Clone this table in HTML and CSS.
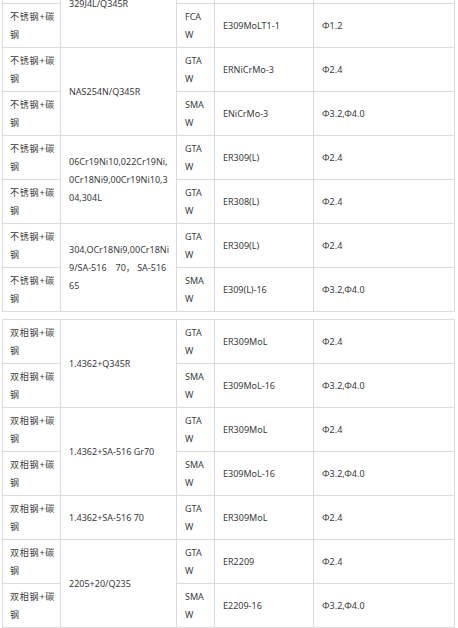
FILE: index.html
```html
<!DOCTYPE html>
<html lang="zh">
<head>
<meta charset="utf-8">
<title>焊材选用表</title>
<link rel="stylesheet" href="styles.css">
</head>
<body>
<div class="page">
  <table class="grid first">
    <colgroup><col class="c1"><col class="c2"><col class="c3"><col class="c4"><col class="c5"></colgroup>
    <tr><td class="cn">不锈钢+碳钢</td><td class="mat" rowspan="2">329J4L/Q345R</td><td>GTAW</td><td>ER309MoL</td><td>Φ2.4</td></tr>
    <tr><td class="cn">不锈钢+碳钢</td><td>FCAW</td><td>E309MoLT1-1</td><td>Φ1.2</td></tr>
    <tr><td class="cn">不锈钢+碳钢</td><td class="mat" rowspan="2">NAS254N/Q345R</td><td>GTAW</td><td>ERNiCrMo-3</td><td>Φ2.4</td></tr>
    <tr><td class="cn">不锈钢+碳钢</td><td>SMAW</td><td>ENiCrMo-3</td><td>Φ3.2,Φ4.0</td></tr>
    <tr><td class="cn">不锈钢+碳钢</td><td class="mat" rowspan="2">06Cr19Ni10,022Cr19Ni,0Cr18Ni9,00Cr19Ni10,304,304L</td><td>GTAW</td><td>ER309(L)</td><td>Φ2.4</td></tr>
    <tr><td class="cn">不锈钢+碳钢</td><td>GTAW</td><td>ER308(L)</td><td>Φ2.4</td></tr>
    <tr><td class="cn">不锈钢+碳钢</td><td class="mat" rowspan="2">304,OCr18Ni9,00Cr18Ni9/SA-516　70， SA-516 65</td><td>GTAW</td><td>ER309(L)</td><td>Φ2.4</td></tr>
    <tr><td class="cn">不锈钢+碳钢</td><td>SMAW</td><td>E309(L)-16</td><td>Φ3.2,Φ4.0</td></tr>
  </table>
  <table class="grid second">
    <colgroup><col class="c1"><col class="c2"><col class="c3"><col class="c4"><col class="c5"></colgroup>
    <tr><td class="cn">双相钢+碳钢</td><td class="mat" rowspan="2">1.4362+Q345R</td><td>GTAW</td><td>ER309MoL</td><td>Φ2.4</td></tr>
    <tr><td class="cn">双相钢+碳钢</td><td>SMAW</td><td>E309MoL-16</td><td>Φ3.2,Φ4.0</td></tr>
    <tr><td class="cn">双相钢+碳钢</td><td class="mat" rowspan="2">1.4362+SA-516 Gr70</td><td>GTAW</td><td>ER309MoL</td><td>Φ2.4</td></tr>
    <tr><td class="cn">双相钢+碳钢</td><td>SMAW</td><td>E309MoL-16</td><td>Φ3.2,Φ4.0</td></tr>
    <tr><td class="cn">双相钢+碳钢</td><td class="mat">1.4362+SA-516 70</td><td>GTAW</td><td>ER309MoL</td><td>Φ2.4</td></tr>
    <tr><td class="cn">双相钢+碳钢</td><td class="mat" rowspan="2">2205+20/Q235</td><td>GTAW</td><td>ER2209</td><td>Φ2.4</td></tr>
    <tr><td class="cn">双相钢+碳钢</td><td>SMAW</td><td>E2209-16</td><td>Φ3.2,Φ4.0</td></tr>
    <tr><td class="cn">双相钢+碳钢</td><td class="mat">2205+Q345R</td><td>GTAW</td><td>ER2209</td><td>Φ2.4</td></tr>
  </table>
</div>
</body>
</html>
```

FILE: styles.css
```css
html, body {
  margin: 0;
  padding: 0;
  background: #ffffff;
}

body {
  font-family: "Noto Sans", "Noto Sans CJK SC", sans-serif;
  font-size: 9px;
  color: #3a3a3a;
  overflow: hidden;
}

.page {
  padding: 0 4px 0 2px;
  margin-top: -41px;
}

.grid {
  width: 452px;
  border-collapse: collapse;
  table-layout: fixed;
}

.grid.second {
  margin-top: 7px;
}

.c1 { width: 58px; }
.c2 { width: 116px; }
.c3 { width: 38px; }
.c4 { width: 99px; }
.c5 { width: 141px; }

.grid td {
  border: 1px solid #dcdcdc;
  padding: 4px 7px 3px 8px;
  line-height: 18px;
  vertical-align: middle;
  word-break: break-all;
  text-align: left;
}

.grid td.mat {
  padding-left: 8px;
  padding-right: 5px;
}

.grid td.cn {
  letter-spacing: 0.8px;
  padding-left: 7px;
  padding-right: 4px;
}
```
